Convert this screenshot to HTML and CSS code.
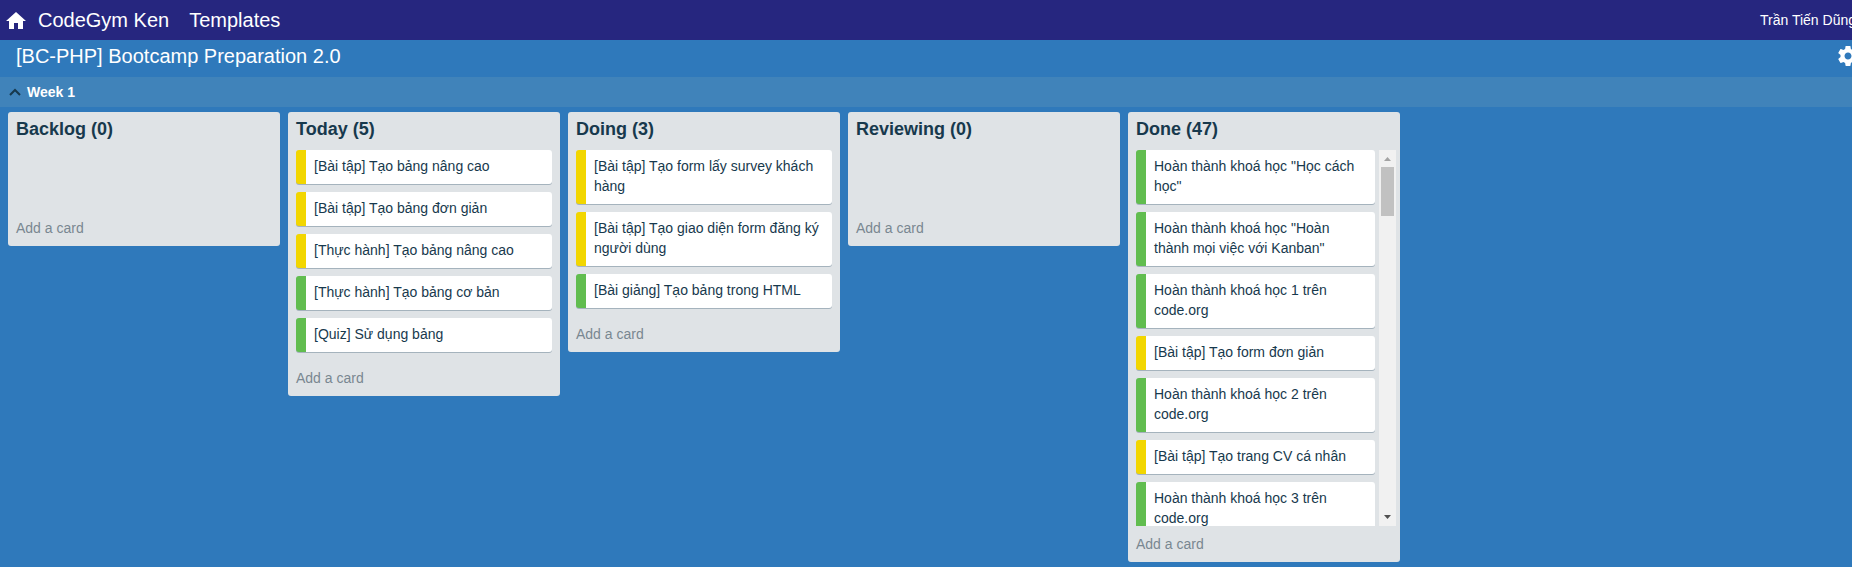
FILE: index.html
```html
<!DOCTYPE html>
<html lang="vi">
<head>
<meta charset="utf-8">
<title>[BC-PHP] Bootcamp Preparation 2.0</title>
<link rel="stylesheet" href="styles.css">
</head>
<body>
<header class="topbar">
  <nav class="topnav">
    <a class="home" href="#" aria-label="Home">
      <svg class="home-icon" viewBox="0 0 20 17" aria-hidden="true"><path d="M10 0L0 9h3v8h5v-6h4v6h5V9h3z"/></svg>
    </a>
    <a href="#">CodeGym Ken</a>
    <a href="#">Templates</a>
  </nav>
  <a class="user" href="#">Trần Tiến Dũng</a>
</header>
<div class="board-header">
  <h1 class="board-title">[BC-PHP] Bootcamp Preparation 2.0</h1>
  <button class="settings" type="button" aria-label="Settings">
    <svg class="gear-icon" viewBox="2 2 20 20" aria-hidden="true"><path d="M19.43 12.98c.04-.32.07-.64.07-.98s-.03-.66-.07-.98l2.11-1.65c.19-.15.24-.42.12-.64l-2-3.46c-.12-.22-.39-.3-.61-.22l-2.49 1c-.52-.4-1.08-.73-1.69-.98l-.38-2.65C14.46 2.18 14.25 2 14 2h-4c-.25 0-.46.18-.49.42l-.38 2.65c-.61.25-1.17.59-1.69.98l-2.49-1c-.23-.09-.49 0-.61.22l-2 3.46c-.13.22-.07.49.12.64l2.11 1.65c-.04.32-.07.65-.07.98s.03.66.07.98l-2.11 1.65c-.19.15-.24.42-.12.64l2 3.46c.12.22.39.3.61.22l2.49-1c.52.4 1.08.73 1.69.98l.38 2.65c.03.24.24.42.49.42h4c.25 0 .46-.18.49-.42l.38-2.65c.61-.25 1.17-.59 1.69-.98l2.49 1c.23.09.49 0 .61-.22l2-3.46c.12-.22.07-.49-.12-.64l-2.11-1.65zM12 15.5c-1.93 0-3.5-1.57-3.5-3.5s1.57-3.5 3.5-3.5 3.5 1.57 3.5 3.5-1.57 3.5-3.5 3.5z"/></svg>
  </button>
</div>
<button class="week" type="button" aria-expanded="true">
  <svg class="chevron" viewBox="0 0 12 8" aria-hidden="true"><path d="M1 7l5-5 5 5"/></svg>
  Week 1
</button>
<main class="lists">
  <section class="list">
    <h2 class="list-title">Backlog (0)</h2>
    <div class="list-body"><ul class="cards"></ul></div>
    <button class="add" type="button">Add a card</button>
  </section>
  <section class="list">
    <h2 class="list-title">Today (5)</h2>
    <div class="list-body">
      <ul class="cards">
        <li class="card yellow">[Bài tập] Tạo bảng nâng cao</li>
        <li class="card yellow">[Bài tập] Tạo bảng đơn giản</li>
        <li class="card yellow">[Thực hành] Tạo bảng nâng cao</li>
        <li class="card green">[Thực hành] Tạo bảng cơ bản</li>
        <li class="card green">[Quiz] Sử dụng bảng</li>
      </ul>
    </div>
    <button class="add" type="button">Add a card</button>
  </section>
  <section class="list">
    <h2 class="list-title">Doing (3)</h2>
    <div class="list-body">
      <ul class="cards">
        <li class="card yellow">[Bài tập] Tạo form lấy survey khách hàng</li>
        <li class="card yellow">[Bài tập] Tạo giao diện form đăng ký người dùng</li>
        <li class="card green">[Bài giảng] Tạo bảng trong HTML</li>
      </ul>
    </div>
    <button class="add" type="button">Add a card</button>
  </section>
  <section class="list">
    <h2 class="list-title">Reviewing (0)</h2>
    <div class="list-body"><ul class="cards"></ul></div>
    <button class="add" type="button">Add a card</button>
  </section>
  <section class="list">
    <h2 class="list-title">Done (47)</h2>
    <div class="list-body scrolling">
      <ul class="cards">
        <li class="card green">Hoàn thành khoá học "Học cách học"</li>
        <li class="card green">Hoàn thành khoá học "Hoàn thành mọi việc với Kanban"</li>
        <li class="card green">Hoàn thành khoá học 1 trên code.org</li>
        <li class="card yellow">[Bài tập] Tạo form đơn giản</li>
        <li class="card green">Hoàn thành khoá học 2 trên code.org</li>
        <li class="card yellow">[Bài tập] Tạo trang CV cá nhân</li>
        <li class="card green">Hoàn thành khoá học 3 trên code.org</li>
      </ul>
      <div class="scrollbar" aria-hidden="true">
        <svg class="arrow up" viewBox="0 0 17 17"><path d="M5 11h7L8.500 7z"/></svg>
        <div class="thumb"></div>
        <svg class="arrow down" viewBox="0 0 17 17"><path d="M5 6h7l-3.500 4z"/></svg>
      </div>
    </div>
    <button class="add" type="button">Add a card</button>
  </section>
</main>
</body>
</html>
```
FILE: styles.css
```css
* {
  box-sizing: border-box;
}

body {
  display: flex;
  flex-direction: column;
  height: 100vh;
  margin: 0;
  overflow: hidden;
  background: #2f79bb;
  color: #17394d;
  font: 14px/20px "Liberation Sans", Arial, sans-serif;
}

a {
  color: inherit;
  text-decoration: none;
}

button {
  border: 0;
  background: none;
  font: inherit;
  text-align: left;
  cursor: pointer;
}

.topbar {
  display: flex;
  flex: none;
  align-items: center;
  justify-content: space-between;
  height: 40px;
  padding-left: 6px;
  background: #26267f;
  color: #fff;
}

.topnav {
  display: flex;
  align-items: center;
  gap: 20px;
  font-size: 20px;
}

.home {
  display: flex;
  margin-right: -8px;
}

.home-icon {
  width: 20px;
  height: 17px;
  fill: #fff;
}

.user {
  margin-right: -4px;
  white-space: nowrap;
}

.board-header {
  display: flex;
  flex: none;
  align-items: flex-start;
  justify-content: space-between;
  height: 37px;
  padding: 6px 0 0 16px;
  color: #fff;
}

.board-title {
  margin: 0;
  font-size: 20px;
  font-weight: 400;
  line-height: 20px;
}

.settings {
  display: flex;
  margin-right: -6px;
  padding: 0;
}

.gear-icon {
  width: 20px;
  height: 20px;
  fill: #fff;
}

.week {
  display: flex;
  flex: none;
  align-items: center;
  gap: 6px;
  height: 30px;
  padding: 0 9px;
  background: #4083ba;
  color: #fff;
  font-weight: 700;
}

.chevron {
  width: 12px;
  height: 8px;
  fill: none;
  stroke: #17394d;
  stroke-width: 2;
}

.lists {
  display: flex;
  flex: 1;
  align-items: flex-start;
  gap: 8px;
  min-height: 0;
  padding: 5px 8px;
}

.list {
  display: flex;
  flex: 0 0 272px;
  flex-direction: column;
  max-height: 100%;
  padding: 0 4px 0 8px;
  border-radius: 3px;
  background: #dfe3e6;
}

.list-title {
  flex: none;
  margin: 0;
  padding: 7px 0 11px;
  font-size: 18px;
  line-height: 20px;
}

.list-body {
  display: flex;
  gap: 4px;
  min-height: 60px;
  padding-right: 4px;
  overflow: hidden;
}

.scrolling {
  padding-right: 0;
}

.cards {
  flex: 1;
  margin: 0;
  padding: 0;
  list-style: none;
}

.card {
  margin-bottom: 8px;
  padding: 6px 8px 8px;
  border-left: 10px solid;
  border-radius: 3px;
  background: #fff;
  box-shadow: 0 1px 0 #a5b3bd;
}

.card.yellow {
  border-left-color: #f2d600;
}

.card.green {
  border-left-color: #61bd4f;
}

.scrollbar {
  display: flex;
  flex: 0 0 17px;
  flex-direction: column;
  align-items: center;
  background: #f1f1f1;
}

.arrow {
  width: 17px;
  height: 17px;
}

.up {
  fill: #a3a3a3;
}

.down {
  margin-top: auto;
  fill: #505050;
}

.thumb {
  width: 13px;
  height: 49px;
  background: #c1c1c1;
}

.add {
  flex: none;
  height: 36px;
  padding: 0;
  color: #798791;
}
```
